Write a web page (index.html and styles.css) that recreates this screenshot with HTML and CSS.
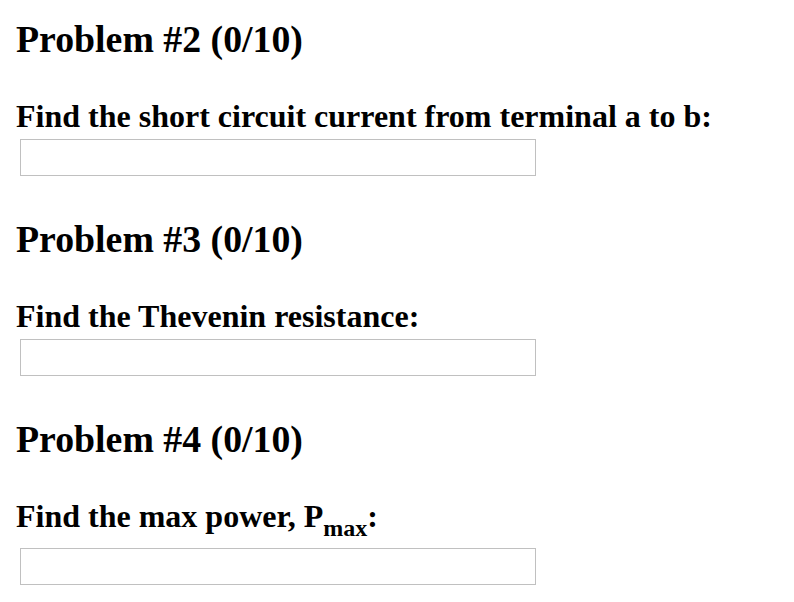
FILE: index.html
```html
<!DOCTYPE html>
<html>
<head>
<meta charset="utf-8">
<link rel="stylesheet" href="styles.css">
</head>
<body>
<div class="page">
  <section class="problem">
    <h2 class="title">Problem #2 (0/10)</h2>
    <p class="label">Find the short circuit current from terminal a to b:</p>
    <input class="answer" type="text">
  </section>
  <section class="problem">
    <h2 class="title">Problem #3 (0/10)</h2>
    <p class="label">Find the Thevenin resistance:</p>
    <input class="answer" type="text">
  </section>
  <section class="problem">
    <h2 class="title">Problem #4 (0/10)</h2>
    <p class="label">Find the max power, P<sub class="sub">max</sub>:</p>
    <input class="answer" type="text">
  </section>
</div>
</body>
</html>
```
FILE: styles.css
```css
html, body {
  margin: 0;
  padding: 0;
  background: #fff;
}
.page {
  display: flex;
  flex-direction: column;
  gap: 41px;
  padding: 17px 0 0 16px;
  font-family: "Liberation Serif", "Times New Roman", serif;
  color: #000;
}
.problem {
  display: flex;
  flex-direction: column;
  align-items: flex-start;
}
.title {
  margin: 0;
  font-size: 37.8px;
  line-height: 44px;
  font-weight: bold;
}
.label {
  margin: 37px 0 0 0;
  font-size: 32px;
  line-height: 36px;
  font-weight: bold;
}
.sub {
  font-size: 0.75em;
  line-height: 1.2;
  vertical-align: -9px;
}
.answer {
  margin: 5px 0 0 4px;
  width: 516px;
  height: 37px;
  box-sizing: border-box;
  border: 1px solid #c0c0c0;
  padding: 0 4px;
  background: #fff;
  outline: none;
}
```
